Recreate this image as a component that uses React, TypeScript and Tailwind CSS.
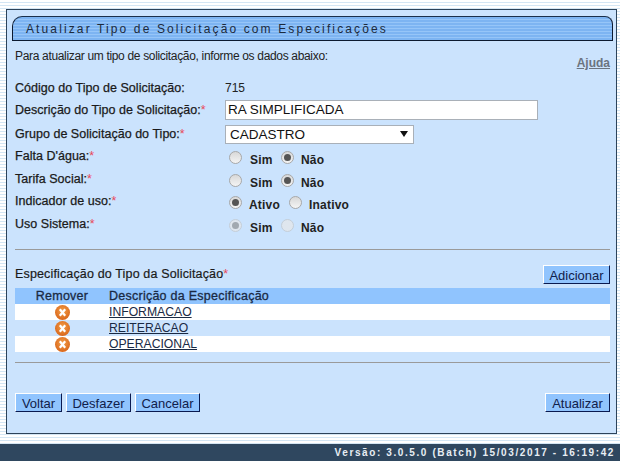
const FONT = "font-['Liberation_Sans',Arial,sans-serif]";
const star = "text-[#e8485a] [-webkit-text-stroke:0px]";

function Radio({ checked, disabled }: { checked?: boolean; disabled?: boolean }) {
  return (
    <span
      className={`inline-flex shrink-0 w-[13px] h-[13px] mt-[1px] rounded-full border items-center justify-center ${
        disabled ? "border-[#c4ced8] bg-[#dfe6ee]" : "border-[#a8a8a8] bg-[linear-gradient(#d8d8d8,#f4f4f4)]"
      }`}
    >
      {checked && <span className={`w-[7px] h-[7px] rounded-full ${disabled ? "bg-[#a2a9b0]" : "bg-[#555555]"}`} />}
    </span>
  );
}

function RadioRow({ label, h, a, b }: { label: string; h: string; a: any; b: any }) {
  return (
    <div className={`flex items-start ${h}`}>
      <div className={`w-[217px] pl-[3px] mt-[-1px] ${labelCls}`}>
        {label}:<span className={star}>*</span>
      </div>
      <div className="flex items-start text-[12px] leading-[14px] font-bold text-[#222222] tracking-[0.2px]">
        <Radio checked={a.checked} disabled={a.disabled} />
        <span className={`${a.gap} mt-[3px] ${a.w}`}>{a.label}</span>
        <Radio checked={b.checked} disabled={b.disabled} />
        <span className={`${b.gap} mt-[3px]`}>{b.label}</span>
      </div>
    </div>
  );
}

function Btn({ children, w }: { children: string; w: string }) {
  return (
    <button className={`${w} h-[19px] pt-[1px] bg-[#90c4fe] border border-t-white border-l-white border-r-[#0a1a50] border-b-[#0a1a50] text-[13px] leading-none text-[#10204a] text-center`}>
      {children}
    </button>
  );
}

function XIcon() {
  return (
    <svg width="15" height="15" viewBox="0 0 15 15">
      <defs>
        <radialGradient id="xg" cx="50%" cy="40%" r="60%">
          <stop offset="0%" stopColor="#f4a04a" />
          <stop offset="100%" stopColor="#d9661a" />
        </radialGradient>
      </defs>
      <circle cx="7.5" cy="7.5" r="7.5" fill="url(#xg)" />
      <path d="M4.8 4.2 L10.2 10.8 M10.2 4.2 L4.8 10.8" stroke="#fff" strokeWidth="2.2" />
    </svg>
  );
}

const rows = [
  { t: "INFORMACAO", bg: "bg-white" },
  { t: "REITERACAO", bg: "bg-[#cbe3fd]" },
  { t: "OPERACIONAL", bg: "bg-white" },
];

const stripe = "bg-[repeating-linear-gradient(180deg,#ffffff_0px,#ffffff_2px,#d4e6f4_2px,#d4e6f4_3px)]";
const labelCls = "text-[12.5px] leading-[14px] tracking-[0.03px] text-[#1a1a1a] [-webkit-text-stroke:0.25px_#1a1a1a]";

export default function App() {
  return (
    <div className={`w-[620px] h-[461px] overflow-hidden flex flex-col ${stripe} ${FONT}`}>
      <div className="pt-[9px] pl-[6px] pr-[3px] h-[444px] shrink-0">
        <div className="h-[425px] border border-[#2c435a] bg-[#cbe3fd] pt-[6px] pl-[5px] pr-[3px]">
          <div className="h-[25px] w-[601px] border border-[#0c1a30] border-t-[#1a2f4a] rounded-tl-[10px] rounded-tr-[8px] bg-[repeating-linear-gradient(180deg,#7db4f2_0px,#7db4f2_2px,#96c5f8_2px,#96c5f8_3px)] flex items-center pl-[13px] text-[12px] tracking-[2.12px] text-[#1c2a3c]">
            Atualizar Tipo de Solicitação com Especificações
          </div>

          <div className="pr-[3px]">
            <div className="flex justify-between items-start h-[36px] pl-[3px]">
              <div className="mt-[8px] text-[12px] tracking-[-0.33px] leading-[14px] text-[#222222]">Para atualizar um tipo de solicitação, informe os dados abaixo:</div>
              <a className="mt-[15px] text-[12px] leading-[14px] font-bold text-[#6b7480] underline">Ajuda</a>
            </div>

            <div className="flex items-start h-[20px] mt-[4px] pl-[3px]">
              <div className={`w-[210px] ${labelCls}`}>Código do Tipo de Solicitação:</div>
              <div className="text-[12px] leading-[14px] text-[#222222]">715</div>
            </div>
            <div className="flex items-start h-[25px] pl-[3px] mt-[-1px]">
              <div className={`w-[210px] mt-[3px] ${labelCls}`}>Descrição do Tipo de Solicitação:<span className={star}>*</span></div>
              <div className="w-[313px] h-[20px] bg-white border border-[#a9b0b8] text-[13.5px] leading-[18px] pl-[2px] text-[#111111]">RA SIMPLIFICADA</div>
            </div>
            <div className="flex items-start h-[25px] pl-[3px]">
              <div className={`w-[210px] mt-[2px] ${labelCls}`}>Grupo de Solicitação do Tipo:<span className={star}>*</span></div>
              <div className="w-[189px] h-[19px] pb-[1px] bg-white border border-[#a9b0b8] text-[13.5px] leading-[15px] pl-[4px] pr-[5px] text-[#111111] flex justify-between items-center">
                <span>CADASTRO</span>
                <svg width="8" height="6" viewBox="0 0 8 6"><path d="M0 0H8L4 6Z" fill="#111" /></svg>
              </div>
            </div>

            <RadioRow label="Falta D'água" h="h-[23px]"
              a={{ label: "Sim", gap: "ml-[8px]", w: "w-[31px]" }}
              b={{ label: "Não", checked: true, gap: "ml-[7px]" }} />
            <RadioRow label="Tarifa Social" h="h-[22px]"
              a={{ label: "Sim", gap: "ml-[8px]", w: "w-[31px]" }}
              b={{ label: "Não", checked: true, gap: "ml-[7px]" }} />
            <RadioRow label="Indicador de uso" h="h-[23px]"
              a={{ label: "Ativo", checked: true, gap: "ml-[7px]", w: "w-[40px]" }}
              b={{ label: "Inativo", gap: "ml-[7px]" }} />
            <RadioRow label="Uso Sistema" h="h-[31px]"
              a={{ label: "Sim", checked: true, disabled: true, gap: "ml-[8px]", w: "w-[31px]" }}
              b={{ label: "Não", disabled: true, gap: "ml-[7px]" }} />

            <div className="h-[1px] bg-[#9a9a9a] ml-[3px]" />

            <div className="flex justify-between items-start h-[23px] mt-[15px] pl-[3px]">
              <div className="mt-[2px] text-[12.5px] leading-[14px] tracking-[0.15px] text-[#1a1a1a] [-webkit-text-stroke:0.2px_#1a1a1a]">Especificação do Tipo da Solicitação<span className={star}>*</span></div>
              <Btn w="w-[67px]">Adicionar</Btn>
            </div>

            <div className="ml-[3px] w-[595px]">
              <div className="flex h-[16px] bg-[#90c4fe] items-center text-[12.5px] tracking-[0.25px] text-[#1a2a44] [-webkit-text-stroke:0.3px_#1a2a44]">
                <div className="w-[94px] text-center">Remover</div>
                <div>Descrição da Especificação</div>
              </div>
              {rows.map((r) => (
                <div key={r.t} className={`flex h-[16px] items-center ${r.bg}`}>
                  <div className="w-[94px] flex justify-center"><XIcon /></div>
                  <a className="text-[12.2px] leading-[14px] text-[#1a2a44] underline">{r.t}</a>
                </div>
              ))}
            </div>

            <div className="h-[1px] bg-[#9a9a9a] ml-[3px] mt-[10px]" />

            <div className="flex justify-between items-start mt-[30px] pl-[3px]">
              <div className="flex gap-[4px]">
                <Btn w="w-[47px]">Voltar</Btn>
                <Btn w="w-[65px]">Desfazer</Btn>
                <Btn w="w-[65px]">Cancelar</Btn>
              </div>
              <Btn w="w-[65px]">Atualizar</Btn>
            </div>
          </div>
        </div>
      </div>
      <div className="flex-1 bg-[#2f475f] flex items-center justify-end pr-[5px] text-[10px] font-bold tracking-[1.6px] text-[#e8eef4]">
        Versão: 3.0.5.0 (Batch) 15/03/2017 - 16:19:42
      </div>
    </div>
  );
}
